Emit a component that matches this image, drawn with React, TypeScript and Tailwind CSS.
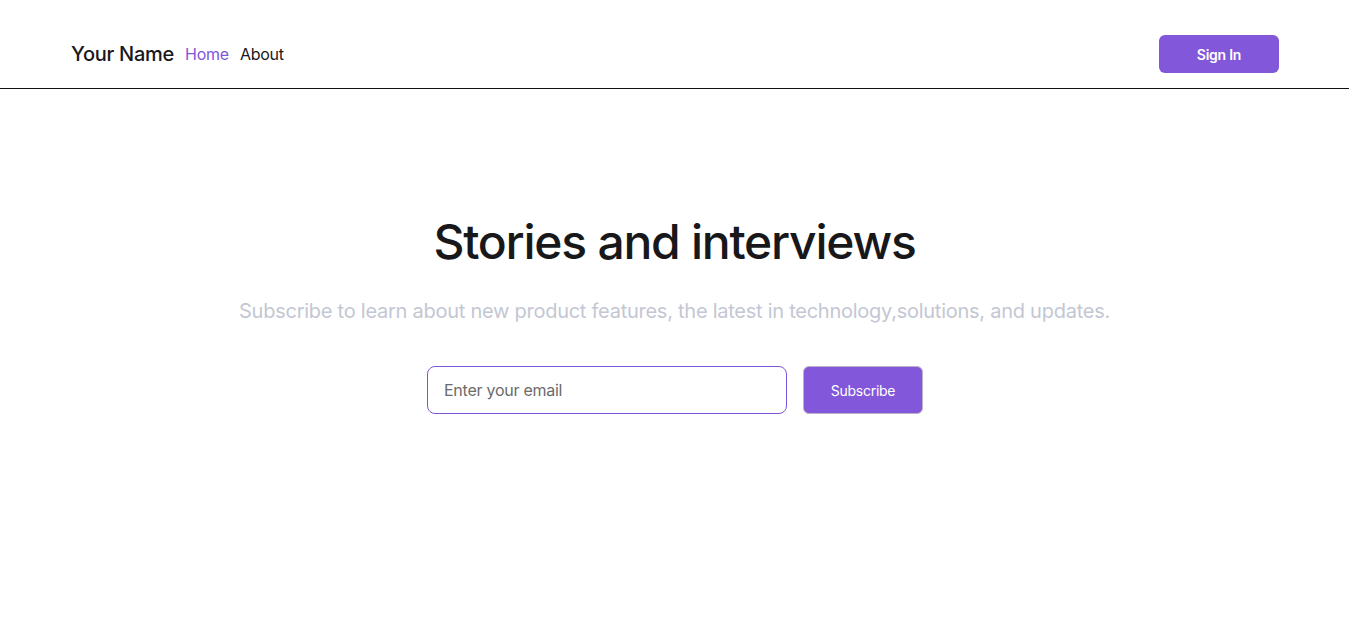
export default function App() {
  return (
    <div className="min-h-screen bg-white font-['Inter','Noto_Sans',sans-serif] tracking-[-0.016em]">
      <header className="h-[89px] border-b border-[#111118] flex items-start justify-between pt-[35px] pl-[71px] pr-[70px]">
        <nav className="h-[38px] flex items-center gap-[11px]">
          <span className="text-[20px] font-medium text-[#18181b]">Your Name</span>
          <a className="text-[16px] text-[#7f56d9]">Home</a>
          <a className="text-[16px] text-[#18181b]">About</a>
        </nav>
        <button className="w-[120px] h-[38px] rounded-md bg-[#8257d9] text-white text-[14px] font-semibold">
          Sign In
        </button>
      </header>
      <main className="flex flex-col items-center pt-[124px]">
        <h1 className="text-[48px] font-medium text-[#18181b] leading-[58px] tracking-[-0.026em]">
          Stories and interviews
        </h1>
        <p className="mt-[25px] text-[20px] text-[#c3c7d3]">
          Subscribe to learn about new product features, the latest in technology,solutions, and updates.
        </p>
        <div className="mt-[40px] flex gap-[16px] pl-[1px]">
          <input
            placeholder="Enter your email"
            className="w-[360px] h-[48px] rounded-lg border border-[#7f56d9] px-4 text-[16px] text-[#333] placeholder:text-[#6b6b6b] outline-none"
          />
          <button className="w-[120px] h-[48px] rounded-md bg-[#8257d9] border border-[#b8b3c9] text-white text-[14px] font-normal">
            Subscribe
          </button>
        </div>
      </main>
    </div>
  );
}
